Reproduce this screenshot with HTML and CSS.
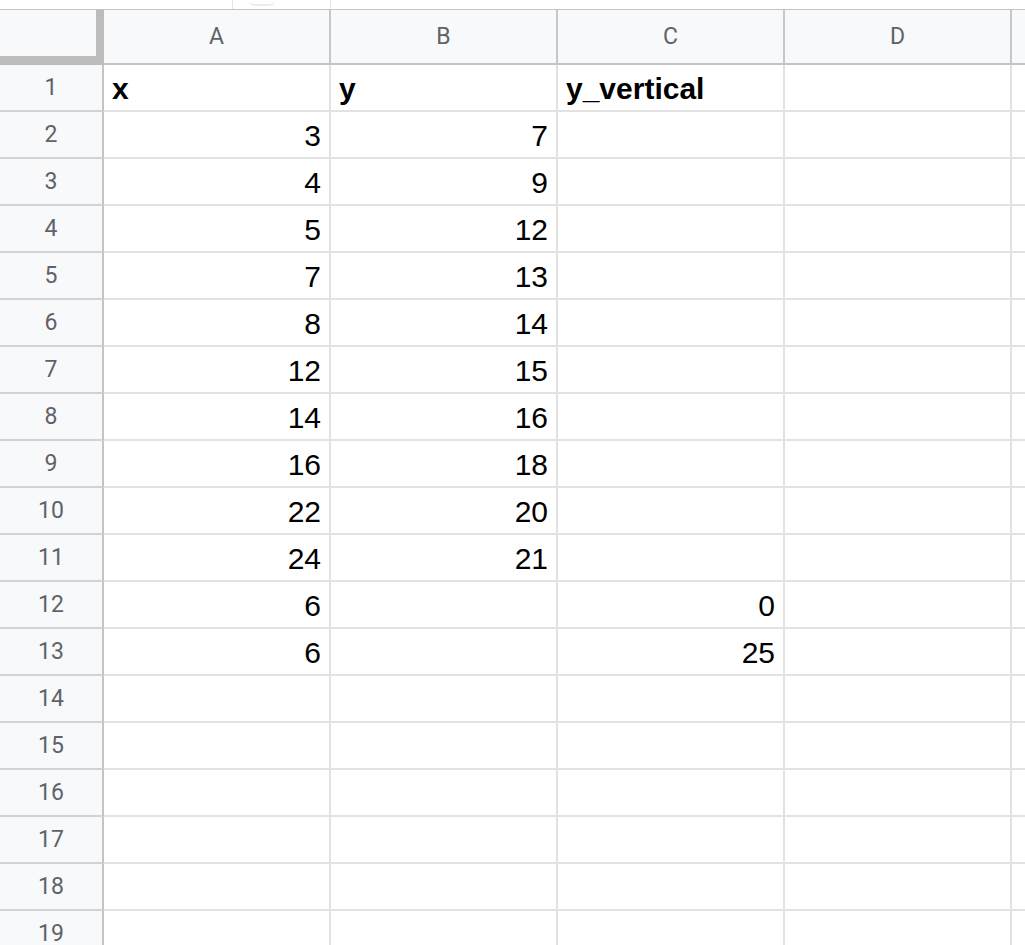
FILE: index.html
```html
<!DOCTYPE html>
<html>
<head>
<meta charset="utf-8">
<link rel="stylesheet" href="styles.css">
</head>
<body>
<div class="topbar"><div class="fbox"><span class="ghost"></span></div></div>
<div class="sheet">
  <div class="corner"></div>
  <div class="colhead">A</div>
  <div class="colhead">B</div>
  <div class="colhead">C</div>
  <div class="colhead">D</div>
  <div class="colhead edge"></div>

  <div class="rowhead">1</div><div class="cell bold">x</div><div class="cell bold">y</div><div class="cell bold">y_vertical</div><div class="cell"></div><div class="cell edge"></div>
  <div class="rowhead">2</div><div class="cell num">3</div><div class="cell num">7</div><div class="cell"></div><div class="cell"></div><div class="cell edge"></div>
  <div class="rowhead">3</div><div class="cell num">4</div><div class="cell num">9</div><div class="cell"></div><div class="cell"></div><div class="cell edge"></div>
  <div class="rowhead">4</div><div class="cell num">5</div><div class="cell num">12</div><div class="cell"></div><div class="cell"></div><div class="cell edge"></div>
  <div class="rowhead">5</div><div class="cell num">7</div><div class="cell num">13</div><div class="cell"></div><div class="cell"></div><div class="cell edge"></div>
  <div class="rowhead">6</div><div class="cell num">8</div><div class="cell num">14</div><div class="cell"></div><div class="cell"></div><div class="cell edge"></div>
  <div class="rowhead">7</div><div class="cell num">12</div><div class="cell num">15</div><div class="cell"></div><div class="cell"></div><div class="cell edge"></div>
  <div class="rowhead">8</div><div class="cell num">14</div><div class="cell num">16</div><div class="cell"></div><div class="cell"></div><div class="cell edge"></div>
  <div class="rowhead">9</div><div class="cell num">16</div><div class="cell num">18</div><div class="cell"></div><div class="cell"></div><div class="cell edge"></div>
  <div class="rowhead">10</div><div class="cell num">22</div><div class="cell num">20</div><div class="cell"></div><div class="cell"></div><div class="cell edge"></div>
  <div class="rowhead">11</div><div class="cell num">24</div><div class="cell num">21</div><div class="cell"></div><div class="cell"></div><div class="cell edge"></div>
  <div class="rowhead">12</div><div class="cell num">6</div><div class="cell"></div><div class="cell num">0</div><div class="cell"></div><div class="cell edge"></div>
  <div class="rowhead">13</div><div class="cell num">6</div><div class="cell"></div><div class="cell num">25</div><div class="cell"></div><div class="cell edge"></div>
  <div class="rowhead">14</div><div class="cell"></div><div class="cell"></div><div class="cell"></div><div class="cell"></div><div class="cell edge"></div>
  <div class="rowhead">15</div><div class="cell"></div><div class="cell"></div><div class="cell"></div><div class="cell"></div><div class="cell edge"></div>
  <div class="rowhead">16</div><div class="cell"></div><div class="cell"></div><div class="cell"></div><div class="cell"></div><div class="cell edge"></div>
  <div class="rowhead">17</div><div class="cell"></div><div class="cell"></div><div class="cell"></div><div class="cell"></div><div class="cell edge"></div>
  <div class="rowhead">18</div><div class="cell"></div><div class="cell"></div><div class="cell"></div><div class="cell"></div><div class="cell edge"></div>
  <div class="rowhead">19</div><div class="cell"></div><div class="cell"></div><div class="cell"></div><div class="cell"></div><div class="cell edge"></div>
</div>
</body>
</html>
```
FILE: styles.css
```css
html, body {
  margin: 0;
  padding: 0;
  background: #ffffff;
  overflow: hidden;
}
body {
  width: 1025px;
  height: 945px;
  font-family: "Liberation Sans", Arial, sans-serif;
}
.topbar {
  height: 9px;
  display: flex;
  padding-left: 232px;
}
.fbox {
  width: 99px;
  height: 9px;
  box-sizing: border-box;
  border-left: 1px solid #e4e4e4;
  border-right: 1px solid #e4e4e4;
  display: flex;
  justify-content: flex-start;
  padding-left: 16px;
}
.ghost {
  display: block;
  width: 26px;
  height: 4px;
  border-bottom: 2px solid #ececec;
  border-radius: 0 0 6px 6px;
}
.sheet {
  display: grid;
  grid-template-columns: 104px 227px 227px 227px 227px 1fr;
  grid-template-rows: 55px;
  grid-auto-rows: 47px;
  border-top: 1px solid #c4c4c4;
}
.sheet > div {
  box-sizing: border-box;
}
.corner {
  background: #f8f9fa;
  border-right: 8px solid #bcbcbc;
  border-bottom: 9px solid #bcbcbc;
}
.colhead {
  background: #f8f9fa;
  border-right: 2px solid #c7c7c7;
  border-bottom: 2px solid #c4c4c4;
  display: flex;
  align-items: center;
  justify-content: center;
  font-family: Roboto, "Liberation Sans", Arial, sans-serif;
  font-size: 23px;
  color: #5f6368;
}
.colhead.edge {
  border-right: none;
}
.rowhead {
  background: #f8f9fa;
  border-right: 2px solid #c4c4c4;
  border-bottom: 2px solid #d3d3d3;
  display: flex;
  align-items: center;
  justify-content: center;
  font-family: Roboto, "Liberation Sans", Arial, sans-serif;
  font-size: 23px;
  color: #5f6368;
}
.cell {
  border-right: 2px solid #e2e2e3;
  border-bottom: 2px solid #e2e2e3;
  display: flex;
  align-items: flex-end;
  padding: 0 8px 6px 8px;
  font-size: 30px;
  line-height: 30px;
  color: #000000;
  white-space: nowrap;
}
.cell.edge {
  border-right: none;
}
.cell.num {
  justify-content: flex-end;
}
.cell.bold {
  font-weight: bold;
}
```
